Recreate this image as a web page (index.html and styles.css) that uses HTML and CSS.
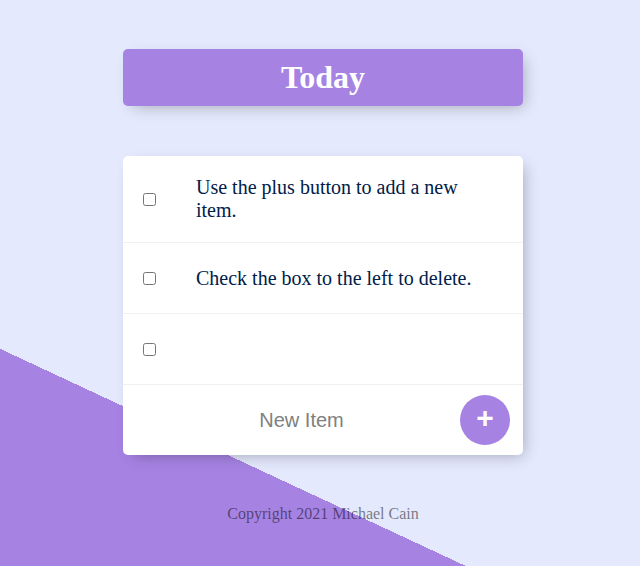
FILE: index.html
```html
<!DOCTYPE html>
<html lang="en" class="page">
<head>
<meta charset="utf-8">
<title>To Do List</title>
<link rel="stylesheet" href="styles.css">
</head>
<body class="page-body">
  <div class="box heading">
    <h1 class="title">Today</h1>
  </div>
  <div class="box">
    <div class="item">
      <input class="check" type="checkbox">
      <p class="item-text">Use the plus button to add a new item.</p>
    </div>
    <div class="item">
      <input class="check" type="checkbox">
      <p class="item-text">Check the box to the left to delete.</p>
    </div>
    <div class="item">
      <input class="check" type="checkbox">
      <p class="item-text"></p>
    </div>
    <form class="item new-form" onsubmit="return false">
      <input class="new-input" type="text" name="newItem" placeholder="New Item" autocomplete="off">
      <button class="add-btn" type="submit">+</button>
    </form>
  </div>
  <footer class="footer">Copyright 2021 Michael Cain</footer>
</body>
</html>
```

FILE: styles.css
```css
.page {
  background-color: #E4E9FD;
  background-image: linear-gradient(25deg, #A683E3 50%, #E4E9FD 50%);
  min-height: 996px;
  font-family: "Liberation Serif", "Times New Roman", serif;
}

.page-body {
  margin: 0 8px 0 14px;
  padding-top: 1px;
}

.title {
  color: #fff;
  padding: 10px;
  margin: 0;
  font-size: 32px;
}

.box {
  max-width: 400px;
  margin: 50px auto;
  background: white;
  border-radius: 5px;
  box-shadow: 5px 5px 15px -5px rgba(0, 0, 0, 0.3);
}

.heading {
  margin-top: 48px;
  background-color: #A683E3;
  text-align: center;
}

.item {
  min-height: 70px;
  display: flex;
  align-items: center;
  border-bottom: 1px solid #F1F1F1;
}

.item:last-child {
  border-bottom: 0;
}

.check {
  margin: 20px;
}

.item-text {
  margin: 0;
  padding: 20px;
  font-size: 20px;
  font-weight: 200;
  color: #00204a;
}

.new-form {
  text-align: center;
  margin: 0 0 0 20px;
}

.add-btn {
  min-height: 50px;
  width: 50px;
  border-radius: 50%;
  border-color: transparent;
  background-color: #A683E3;
  color: #fff;
  font-family: "Liberation Sans", Arial, sans-serif;
  font-weight: bold;
  font-size: 30px;
  padding: 1px 6px 6px;
  border-width: 0;
}

.new-input {
  text-align: center;
  height: 60px;
  border: none;
  background: transparent;
  font-family: "Liberation Sans", Arial, sans-serif;
  font-size: 20px;
  font-weight: 200;
  width: 313px;
  padding: 1px 2px;
  margin: 0;
}

.new-input:focus {
  outline: none;
  box-shadow: inset 0 -3px 0 0 #A683E3;
}

.new-input::placeholder {
  color: grey;
  opacity: 1;
}

.footer {
  color: rgba(0, 0, 0, 0.5);
  text-align: center;
}
```
